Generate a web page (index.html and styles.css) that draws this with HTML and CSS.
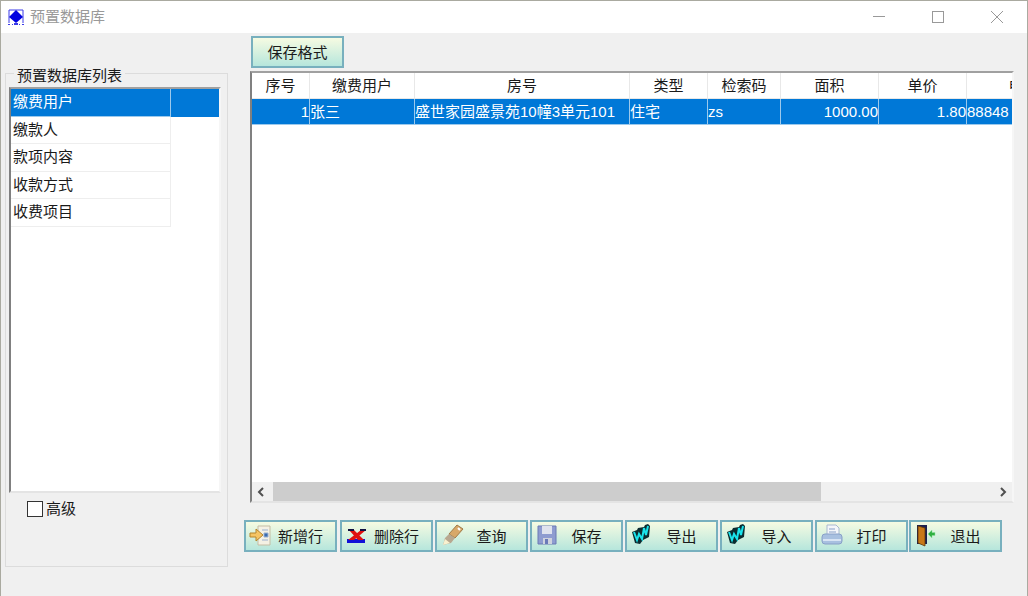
FILE: index.html
```html
<!DOCTYPE html>
<html lang="zh-CN">
<head>
    <meta charset="UTF-8">
    <title>预置数据库</title>
    <link rel="stylesheet" href="styles.css">
</head>
<body>
    <div class="window">
        <div class="titlebar">
            <svg class="app-icon" width="16" height="17" viewBox="0 0 16 17">
                <path d="M1 14V1H15V14" fill="#fff" stroke="#3a3ae8"/>
                <path d="M8 1L15 8L8 14L1 8Z" fill="#0000e0"/>
                <path d="M0 15h2v1H0zM4 15h1v1H4zM6 14h4v2H6zM11 15h1v1h-1zM14 15h2v1h-2z" fill="#3a3ae8"/>
            </svg>
            <span class="title-text">预置数据库</span>
            <div class="win-btns">
                <span class="win-btn"><svg width="14" height="14" viewBox="0 0 14 14"><path d="M1 6.5H13" stroke="#999"/></svg></span>
                <span class="win-btn"><svg width="14" height="14" viewBox="0 0 14 14"><rect x="1.5" y="1.5" width="11" height="11" fill="none" stroke="#999"/></svg></span>
                <span class="win-btn"><svg width="14" height="14" viewBox="0 0 14 14"><path d="M1 1L13 13M13 1L1 13" stroke="#999"/></svg></span>
            </div>
        </div>

        <div class="content">
            <div class="left-side">
                <div class="group">
                    <div class="group-title">预置数据库列表</div>
                    <div class="db-list">
                        <div class="db-row selected"><span class="db-name">缴费用户</span></div>
                        <div class="db-row"><span class="db-name">缴款人</span></div>
                        <div class="db-row"><span class="db-name">款项内容</span></div>
                        <div class="db-row"><span class="db-name">收款方式</span></div>
                        <div class="db-row"><span class="db-name">收费项目</span></div>
                    </div>
                    <div class="advanced">
                        <span class="checkbox"></span>
                        <span>高级</span>
                    </div>
                </div>
            </div>

            <div class="right-side">
                <button class="btn save-format">保存格式</button>
                <div class="grid-box">
                    <div class="grid-body">
                        <div class="grid-row head">
                            <div class="cell c1">序号</div>
                            <div class="cell c2">缴费用户</div>
                            <div class="cell c3">房号</div>
                            <div class="cell c4">类型</div>
                            <div class="cell c5">检索码</div>
                            <div class="cell c6">面积</div>
                            <div class="cell c7">单价</div>
                            <div class="cell c8">电话</div>
                        </div>
                        <div class="grid-row data">
                            <div class="cell c1 num">1</div>
                            <div class="cell c2">张三</div>
                            <div class="cell c3">盛世家园盛景苑10幢3单元101</div>
                            <div class="cell c4">住宅</div>
                            <div class="cell c5">zs</div>
                            <div class="cell c6 num">1000.00</div>
                            <div class="cell c7 num">1.80</div>
                            <div class="cell c8">88848</div>
                        </div>
                    </div>
                    <div class="hscroll">
                        <svg width="10" height="10" viewBox="0 0 10 10"><path d="M7 1L3 5L7 9" fill="none" stroke="#505050" stroke-width="2"/></svg>
                        <div class="track"><div class="thumb"></div></div>
                        <svg width="10" height="10" viewBox="0 0 10 10"><path d="M3 1L7 5L3 9" fill="none" stroke="#505050" stroke-width="2"/></svg>
                    </div>
                </div>

                <div class="toolbar">
                    <button class="btn tool first">
                        <svg width="24" height="24" viewBox="0 0 24 24">
                            <path d="M9 3H21V22H9Z" fill="#f4f1e4" stroke="#c4bda4"/>
                            <path d="M13 7h6M13 17h6M15 10h4v4h-4z" stroke="#9ab0d0" fill="#3a6cb0"/>
                            <path d="M1 10H7V6L14 12L7 18V14H1Z" fill="#f5c565" stroke="#b5852c"/>
                        </svg>
                        <span class="tool-label">新增行</span>
                    </button>
                    <button class="btn tool">
                        <svg width="24" height="24" viewBox="0 0 24 24">
                            <path d="M2 16H20V20H2Z" fill="#1010d8"/>
                            <path d="M4 7H9L19 17H13ZM16 7H21L9 17H3Z" fill="#e01010"/>
                            <path d="M3 6H9V8H3ZM15 6H21V8H15Z" fill="#101040"/>
                        </svg>
                        <span class="tool-label">删除行</span>
                    </button>
                    <button class="btn tool">
                        <svg width="24" height="24" viewBox="0 0 24 24">
                            <path d="M17 2L23 6L15 15L9 11Z" fill="#d8a868" stroke="#a07a48"/>
                            <path d="M9 11L15 15L11 20L3 22L5 15Z" fill="#b8a890"/>
                            <path d="M5 16L10 20L3 22Z" fill="#f9f1cf"/>
                            <path d="M18 5L20 7" stroke="#fff" stroke-width="2"/>
                        </svg>
                        <span class="tool-label">查询</span>
                    </button>
                    <button class="btn tool">
                        <svg width="24" height="24" viewBox="0 0 24 24">
                            <path d="M3 3H21V21H3Z" fill="#8e9cd0" stroke="#6a7ab4"/>
                            <path d="M7 3H17V11H7Z" fill="#dfe3ee"/>
                            <path d="M8 15H17V21H8Z" fill="#cfd3de"/>
                            <path d="M10 16H13V21H10Z" fill="#6a7ab8"/>
                        </svg>
                        <span class="tool-label">保存</span>
                    </button>
                    <button class="btn tool">
                        <svg width="24" height="24" viewBox="0 0 24 24">
                            <path d="M2 9L7 7L8 5L14 4L15 2L18 1L20 3L19 14L13 17L10 21L5 20Z" fill="#0c2c30"/>
                            <path d="M4 9L7 17L9 11L12 16L14 5M14 5L16 12L18 3" fill="none" stroke="#1ae4ec" stroke-width="2"/>
                        </svg>
                        <span class="tool-label">导出</span>
                    </button>
                    <button class="btn tool">
                        <svg width="24" height="24" viewBox="0 0 24 24">
                            <path d="M2 9L7 7L8 5L14 4L15 2L18 1L20 3L19 14L13 17L10 21L5 20Z" fill="#0c2c30"/>
                            <path d="M4 9L7 17L9 11L12 16L14 5M14 5L16 12L18 3" fill="none" stroke="#1ae4ec" stroke-width="2"/>
                        </svg>
                        <span class="tool-label">导入</span>
                    </button>
                    <button class="btn tool">
                        <svg width="24" height="24" viewBox="0 0 24 24">
                            <path d="M7 2H16L19 5V12H7Z" fill="#f4f6fa" stroke="#a8b8d0"/>
                            <path d="M9 6H15M9 9H16" stroke="#88a0c8"/>
                            <rect x="2" y="11" width="20" height="10" rx="3" fill="#a8c0e0" stroke="#88a0c8"/>
                            <path d="M3 17H21" stroke="#d8e4f4" stroke-width="2"/>
                        </svg>
                        <span class="tool-label">打印</span>
                    </button>
                    <button class="btn tool exit">
                        <svg width="24" height="24" viewBox="0 0 24 24">
                            <path d="M3 2H13V21H3Z" fill="#1c2050"/>
                            <path d="M4 3L11 5V23L4 20Z" fill="#c87818" stroke="#603808" stroke-width=".8"/>
                            <path d="M14 11L18 7V9.500H21V12.500H18V15Z" fill="#30b040" stroke="#90e0a0" stroke-width=".5"/>
                        </svg>
                        <span class="tool-label">退出</span>
                    </button>
                </div>
            </div>
        </div>
    </div>
</body>
</html>
```

FILE: styles.css
```css
* {
    box-sizing: border-box;
}

html, body {
    margin: 0;
    height: 100%;
    overflow: hidden;
}

body {
    font-family: "Liberation Sans", "Noto Sans CJK SC", sans-serif;
    font-size: 15px;
    color: #1a1a1a;
    background-color: #f0f0f0;
}

.window {
    height: 596px;
    border-top: 1px solid #aaaaa0;
    border-left: 1px solid #aaaaa0;
    border-right: 1px solid #aaaaa0;
    display: flex;
    flex-direction: column;
}

.titlebar {
    height: 32px;
    background-color: #fff;
    display: flex;
    align-items: center;
    padding-left: 7px;
    flex-shrink: 0;
}

.app-icon {
    margin-right: 6px;
}

.title-text {
    color: #999;
    line-height: 20px;
}

.win-btns {
    margin-left: auto;
    padding-right: 1px;
    display: flex;
}

.win-btn {
    width: 59px;
    height: 32px;
    display: flex;
    align-items: center;
    justify-content: center;
}

.content {
    flex: 1;
    display: flex;
}

.left-side {
    width: 243px;
    padding: 40px 0 0 4px;
    flex-shrink: 0;
}

.group {
    width: 223px;
    height: 494px;
    border: 1px solid #dcdcdc;
    padding: 0 6px 0 3px;
}

.group-title {
    width: fit-content;
    margin: -8px 0 0 5px;
    padding: 0 3px;
    height: 21px;
    line-height: 20px;
    background-color: #f0f0f0;
}

.db-list {
    height: 406px;
    background-color: #fff;
    border-left: 2px solid #808080;
    border-top: 2px solid #a0a0a0;
    border-right: 2px solid #f6f6f6;
    border-bottom: 2px solid #e4e4e4;
}

.db-row {
    height: 27.5px;
}

.db-row.selected {
    background-color: #0078d7;
    color: #fff;
}

.db-name {
    display: block;
    width: 160px;
    height: 100%;
    padding-left: 2px;
    line-height: 26px;
    border-right: 1px solid #eee;
    border-bottom: 1px solid #eee;
}

.selected .db-name {
    border-color: #9cc9ec;
}

.advanced {
    display: flex;
    align-items: center;
    gap: 3px;
    margin: 8px 0 0 18px;
    height: 16px;
    line-height: 16px;
}

.checkbox {
    width: 16px;
    height: 16px;
    background-color: #fff;
    border: 1px solid #333;
}

.right-side {
    flex: 1;
    min-width: 0;
}

.btn {
    font-family: inherit;
    font-size: 15px;
    color: #1a1a1a;
    border: 2px solid #78b0be;
    background: linear-gradient(#f6fbe2, #b6e6dc);
    padding: 0;
}

.save-format {
    display: block;
    width: 93px;
    height: 32px;
    margin: 3px 0 0 7px;
    padding-bottom: 2px;
}

.grid-box {
    width: 764px;
    height: 432px;
    margin: 3px 0 0 6px;
    background-color: #fff;
    border-left: 2px solid #808080;
    border-top: 2px solid #a0a0a0;
    border-right: 2px solid #f6f6f6;
    border-bottom: 2px solid #e4e4e4;
    display: flex;
    flex-direction: column;
}

.grid-body {
    flex: 1;
    overflow: hidden;
}

.grid-row {
    display: flex;
    height: 26px;
    width: max-content;
}

.cell {
    flex-shrink: 0;
    line-height: 25px;
    white-space: nowrap;
    overflow: hidden;
    border-right: 1px solid #e8e8e8;
    border-bottom: 1px solid #e8e8e8;
}

.head .cell {
    text-align: center;
}

.data {
    background-color: #0078d7;
    color: #fff;
}

.data .cell {
    border-color: #9cc9ec;
}

.data .cell.num {
    text-align: right;
}

.c1 { width: 58px; }
.c2 { width: 105px; }
.c3 { width: 215px; }
.c4 { width: 78px; }
.c5 { width: 73px; }
.c6 { width: 98px; }
.c7 { width: 88px; }
.c8 { width: 114px; }

.hscroll {
    height: 19px;
    background-color: #f0f0f0;
    display: flex;
    align-items: center;
    padding: 0 4px;
    flex-shrink: 0;
}

.track {
    flex: 1;
    height: 100%;
    padding: 0 170px 0 7px;
    margin-right: 7px;
}

.thumb {
    height: 100%;
    background-color: #cdcdcd;
}

.toolbar {
    display: flex;
    gap: 2px;
    margin-top: 17px;
}

.tool {
    width: 93px;
    height: 32px;
    display: flex;
    align-items: center;
    padding: 0 0 2px 3px;
}

.first {
    margin-right: 1px;
}

.exit {
    margin-left: -1px;
}

.tool-label {
    width: 55px;
    text-align: center;
}
```
